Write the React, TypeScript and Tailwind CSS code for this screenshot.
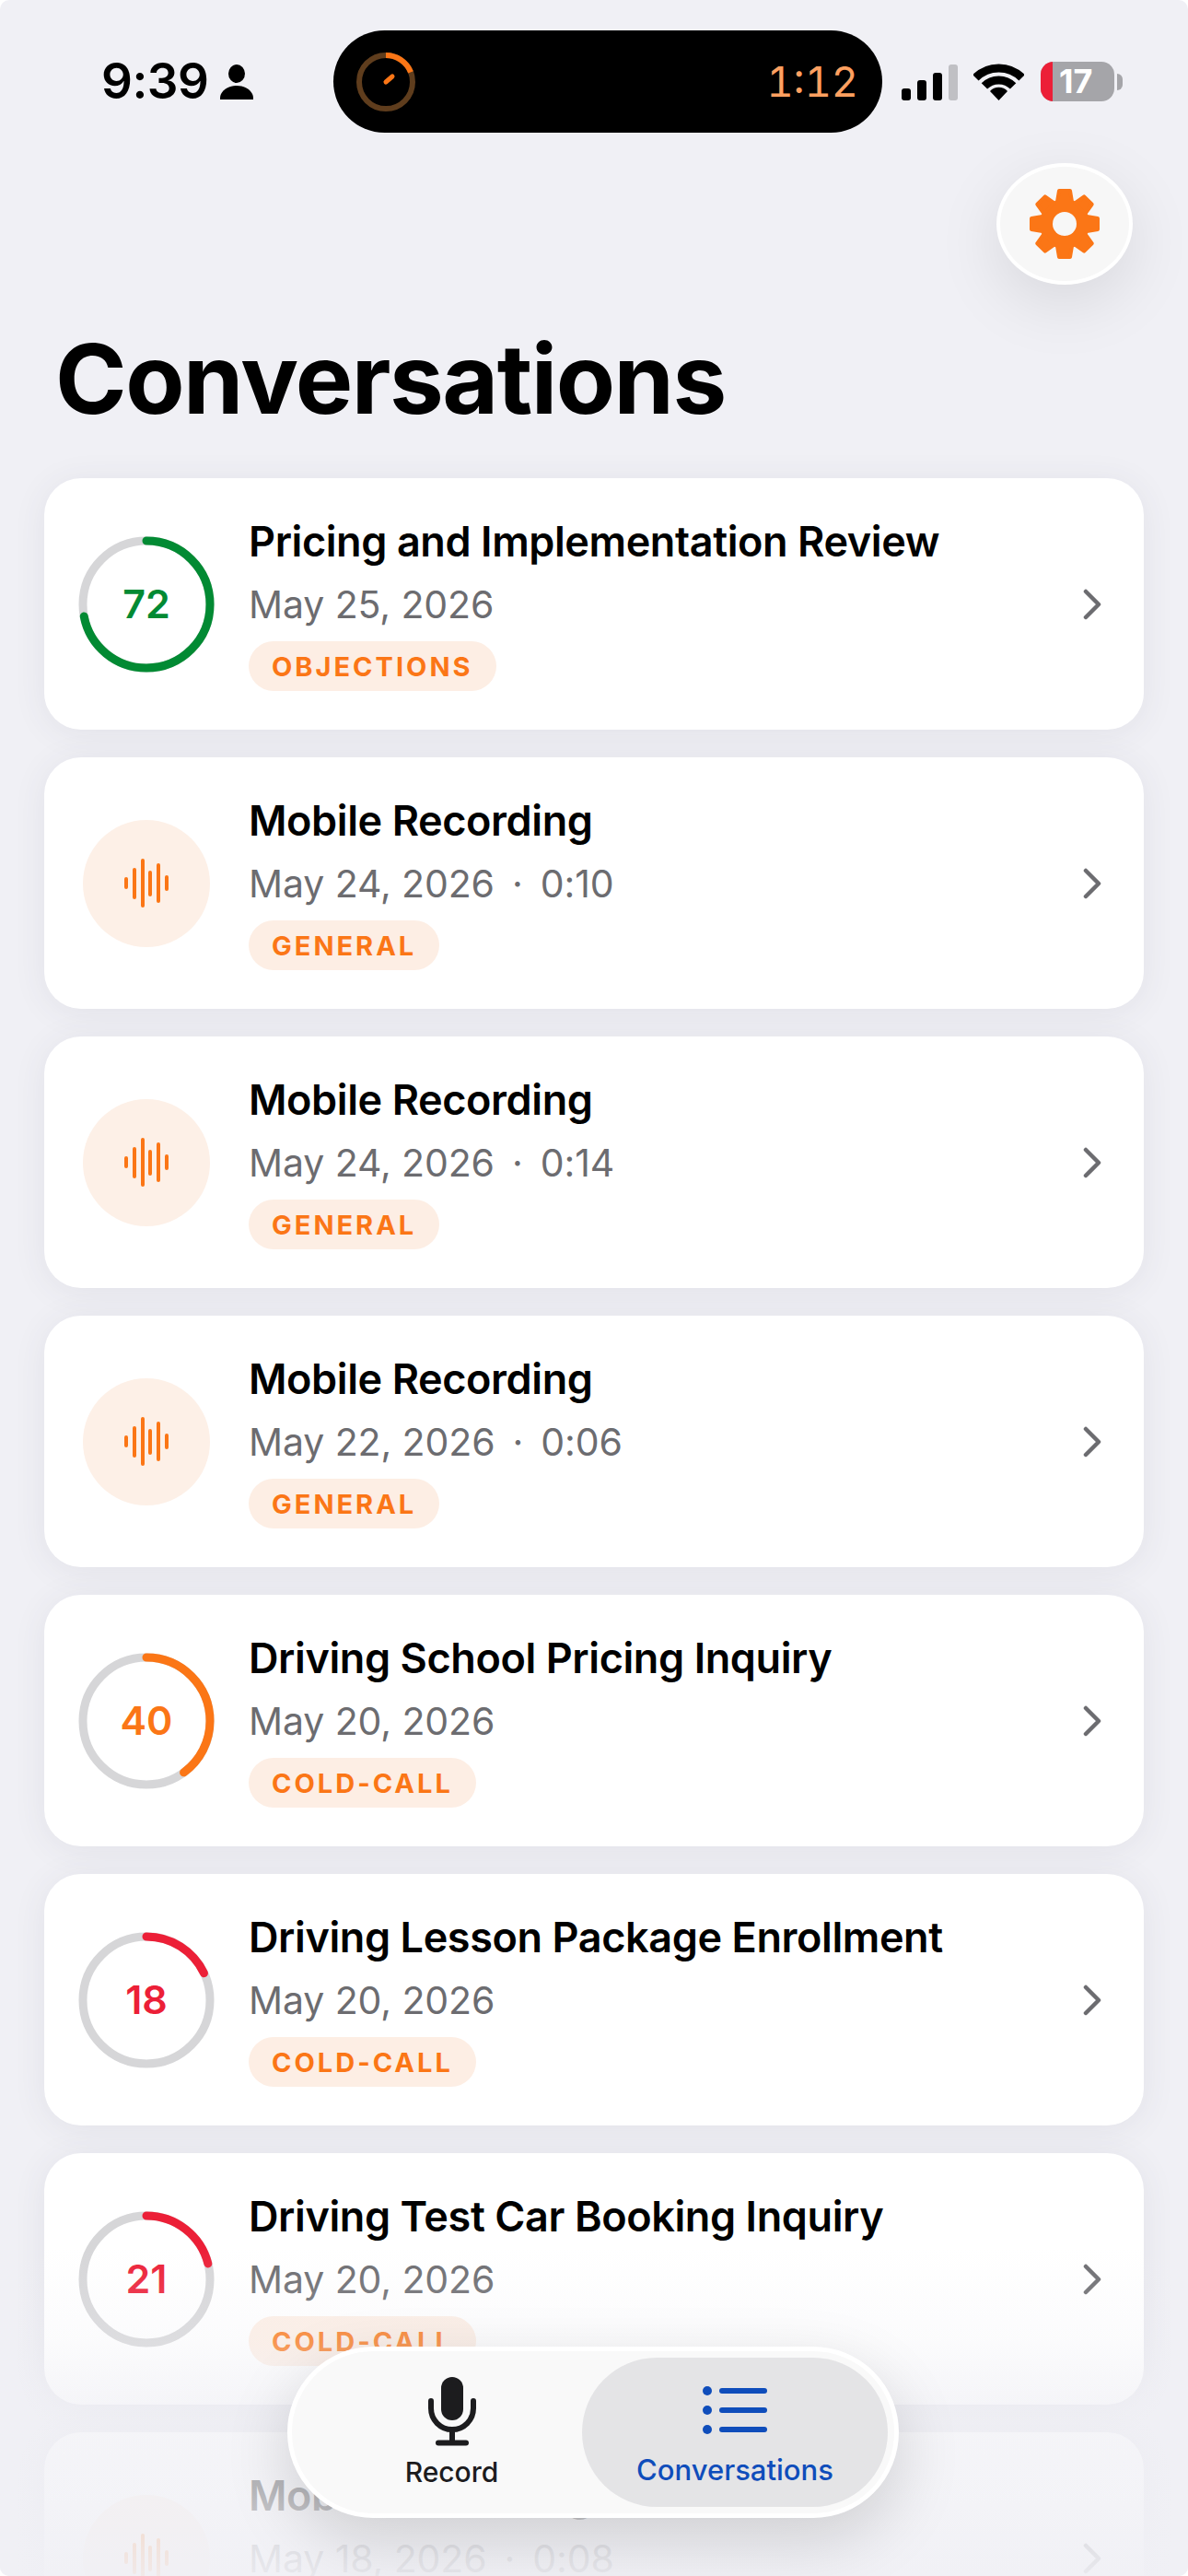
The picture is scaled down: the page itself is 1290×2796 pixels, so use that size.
const items = [
  { title: "Pricing and Implementation Review", date: "May 25, 2026", tag: "OBJECTIONS", score: 72, color: "#028a33" },
  { title: "Mobile Recording", date: "May 24, 2026", time: "0:10", tag: "GENERAL" },
  { title: "Mobile Recording", date: "May 24, 2026", time: "0:14", tag: "GENERAL" },
  { title: "Mobile Recording", date: "May 22, 2026", time: "0:06", tag: "GENERAL" },
  { title: "Driving School Pricing Inquiry", date: "May 20, 2026", tag: "COLD-CALL", score: 40, color: "#fb7616" },
  { title: "Driving Lesson Package Enrollment", date: "May 20, 2026", tag: "COLD-CALL", score: 18, color: "#ec1f37" },
  { title: "Driving Test Car Booking Inquiry", date: "May 20, 2026", tag: "COLD-CALL", score: 21, color: "#ec1f37" },
  { title: "Mobile Recording", date: "May 18, 2026", time: "0:08", tag: "GENERAL" },
];

function ScoreRing({ score, color }: { score: number; color: string }) {
  return (
    <div className="grid h-[148px] w-[148px] shrink-0 place-items-center">
      <svg className="col-start-1 row-start-1" width="148" height="148" viewBox="0 0 148 148">
        <circle cx="74" cy="74" r="69" fill="none" stroke="#d6d6d8" strokeWidth="9" />
        <circle
          cx="74"
          cy="74"
          r="69"
          fill="none"
          stroke={color}
          strokeWidth="9"
          strokeLinecap="round"
          pathLength={100}
          strokeDasharray={`${score} 100`}
          transform="rotate(-90 74 74)"
        />
      </svg>
      <span className="col-start-1 row-start-1 text-[43px] font-semibold leading-none" style={{ color }}>
        {score}
      </span>
    </div>
  );
}

function WaveBadge() {
  const bars = [13, 34, 53, 28, 43, 17];
  return (
    <div className="flex h-[148px] w-[148px] shrink-0 items-center justify-center">
      <div className="flex h-[138px] w-[138px] items-center justify-center gap-[4.7px] rounded-full bg-[#fdf0e7]">
        {bars.map((h, i) => (
          <div key={i} className="w-[4px] rounded-full bg-[#fb7616]" style={{ height: h }} />
        ))}
      </div>
    </div>
  );
}

function Gear() {
  const angles = [0, 45, 90, 135, 180, 225, 270, 315];
  return (
    <svg width="78" height="78" viewBox="-39 -39 78 78">
      <circle r="27" fill="#fb7616" />
      {angles.map((a) => (
        <path
          key={a}
          d="M-6 -36 H6 L8 -24 H-8 Z"
          fill="#fb7616"
          stroke="#fb7616"
          strokeWidth="4"
          strokeLinejoin="round"
          transform={`rotate(${a})`}
        />
      ))}
      <circle r="13" fill="#f7f7f7" />
    </svg>
  );
}

function StatusBar() {
  return (
    <div className="flex items-center pt-[33px]">
      <div className="flex w-[362px] items-center gap-[13px] pl-[110px]">
        <span className="text-[53px] font-semibold leading-[111px] tracking-[-0.5px] text-black">9:39</span>
        <svg width="36" height="38" viewBox="0 0 36 38" fill="#000">
          <ellipse cx="18" cy="10" rx="9" ry="10" />
          <path d="M0 38c0-2 0-4 1-6 3-6 10-9 17-9s14 3 17 9c1 2 1 4 1 6z" />
        </svg>
      </div>
      <div className="flex h-[111px] w-[596px] items-center justify-between rounded-full bg-black pl-[24px] pr-[26px]">
        <svg width="66" height="66" viewBox="0 0 66 66" fill="none">
          <circle cx="33" cy="33" r="29" stroke="#5f3d1d" strokeWidth="6" />
          <circle
            cx="33"
            cy="33"
            r="29"
            stroke="#fb7616"
            strokeWidth="6"
            pathLength={100}
            strokeDasharray="19 100"
            transform="rotate(-90 33 33)"
          />
          <path d="M33 33 L40 27" stroke="#fb7616" strokeWidth="5" strokeLinecap="round" />
        </svg>
        <span className="text-[45px] font-normal leading-none text-[#ffa060] tabular-nums">1:12</span>
      </div>
      <div className="flex items-center pl-[21px]">
        <div className="flex h-[40px] items-end gap-[7px]">
          <div className="h-[13px] w-[10px] rounded-[3px] bg-black" />
          <div className="h-[22px] w-[10px] rounded-[3px] bg-black" />
          <div className="h-[30px] w-[10px] rounded-[3px] bg-black" />
          <div className="h-[39px] w-[10px] rounded-[3px] bg-[#c0c0c4]" />
        </div>
        <svg className="ml-[17px]" width="55" height="40" viewBox="0 0 55 40" fill="none">
          <path d="M2.4 15.3 A35.5 35.5 0 0 1 52.6 15.3" stroke="#000" strokeWidth="9" />
          <path d="M11.9 24.4 A22 22 0 0 1 43.1 24.4" stroke="#000" strokeWidth="9" />
          <path d="M27.5 40 L18 30 A13 13 0 0 1 37 30 Z" fill="#000" />
        </svg>
        <div className="ml-[18px] flex h-[43px] w-[80px] overflow-hidden rounded-[14px] bg-[#a5a5a9]">
          <div className="h-full w-[13px] bg-[#ec1f37]" />
          <span className="pl-[7px] text-[36px] font-bold leading-[43px] text-white">17</span>
        </div>
        <div className="ml-[3px] h-[18px] w-[6px] rounded-r-full bg-[#a5a5a9]" />
      </div>
    </div>
  );
}

function Card({ item }: { item: (typeof items)[number] }) {
  return (
    <div className="flex h-[273px] shrink-0 items-center rounded-[40px] bg-white pl-[37px] pr-[45px] shadow-[0_4px_36px_rgba(60,60,90,0.08)]">
      {item.score !== undefined ? <ScoreRing score={item.score} color={item.color!} /> : <WaveBadge />}
      <div className="ml-[37px] flex min-w-0 flex-1 flex-col items-start">
        <div className="text-[45px] font-semibold leading-[54px] tracking-[-0.4px] text-black">{item.title}</div>
        <div className="mt-[17px] flex h-[48px] items-center text-[41px] leading-[48px] tracking-[-0.1px] text-[#6c6c70]">
          <span>{item.date}</span>
          {item.time && (
            <>
              <span className="px-[19px]">·</span>
              <span>{item.time}</span>
            </>
          )}
        </div>
        <div className="mt-[16px] flex h-[54px] items-center rounded-full bg-[#fdeee4] px-[25px] text-[29px] font-bold leading-none tracking-[3px] text-[#fb7616]">
          {item.tag}
        </div>
      </div>
      <svg width="22" height="34" viewBox="0 0 22 34" fill="none" stroke="#6c6c70" strokeWidth="4.5" strokeLinecap="round" strokeLinejoin="round">
        <path d="M4 3 L18 17 L4 31" />
      </svg>
    </div>
  );
}

function BottomNav() {
  return (
    <div className="absolute bottom-[63px] left-[312px] flex h-[186px] w-[664px] items-center rounded-full border-[5px] border-white bg-[#f9f9f9] pl-[7px] pr-[7px] shadow-[0_24px_70px_rgba(0,0,0,0.15)]">
      <div className="flex h-[162px] flex-1 flex-col items-center justify-center pl-[25px]">
        <svg width="52" height="76" viewBox="0 0 52 76" fill="none" stroke="#1c1c1e">
          <rect x="14" y="1" width="24" height="47" rx="12" fill="#1c1c1e" stroke="none" />
          <path d="M3 27 v8 a23 23 0 0 0 46 0 v-8" strokeWidth="6" strokeLinecap="round" />
          <path d="M26 58 v14" strokeWidth="6" />
          <path d="M11 72.5 h30" strokeWidth="6" strokeLinecap="round" />
        </svg>
        <span className="mt-[10px] text-[30px] font-medium leading-[36px] text-[#1c1c1e]">Record</span>
      </div>
      <div className="flex h-[162px] w-[332px] flex-col items-center justify-center rounded-full bg-[#e4e4e6]">
        <svg className="mt-[8px]" width="70" height="52" viewBox="0 0 70 52" fill="#0f4dbb" stroke="none">
          <circle cx="5" cy="5" r="5" />
          <circle cx="5" cy="26" r="5" />
          <circle cx="5" cy="47" r="5" />
          <rect x="18" y="2" width="52" height="6" rx="3" />
          <rect x="18" y="23" width="52" height="6" rx="3" />
          <rect x="18" y="44" width="52" height="6" rx="3" />
        </svg>
        <span className="mt-[21px] text-[31px] font-medium leading-[36px] text-[#0f4dbb]">Conversations</span>
      </div>
    </div>
  );
}

export default function App() {
  return (
    <div className="relative h-[2796px] w-[1290px] overflow-hidden rounded-[10px] bg-[#f0f0f5] [font-family:Inter,sans-serif]">
      <StatusBar />
      <div className="mt-[33px] flex justify-end pr-[60px]">
        <button className="flex h-[132px] w-[148px] items-center justify-center rounded-[50%] border-[4px] border-white bg-[#f7f7f7] shadow-[0_20px_70px_rgba(0,0,0,0.1)]">
          <Gear />
        </button>
      </div>
      <h1 className="mt-[52px] pl-[60px] text-[105px] font-bold leading-[100px] tracking-[-1.5px] text-black">Conversations</h1>
      <div className="mt-[58px] flex flex-col gap-[30px] pl-[48px] pr-[48px]">
        {items.map((item, i) => (
          <Card key={i} item={item} />
        ))}
      </div>
      <div className="absolute inset-x-0 bottom-0 h-[356px] bg-[linear-gradient(to_bottom,rgba(240,240,245,0)_0%,rgba(240,240,245,0.25)_28%,rgba(240,240,245,0.68)_48%,rgba(240,240,245,0.76)_73%,rgba(240,240,245,0.9)_93%,rgba(240,240,245,0.94)_100%)]" />
      <BottomNav />
    </div>
  );
}
